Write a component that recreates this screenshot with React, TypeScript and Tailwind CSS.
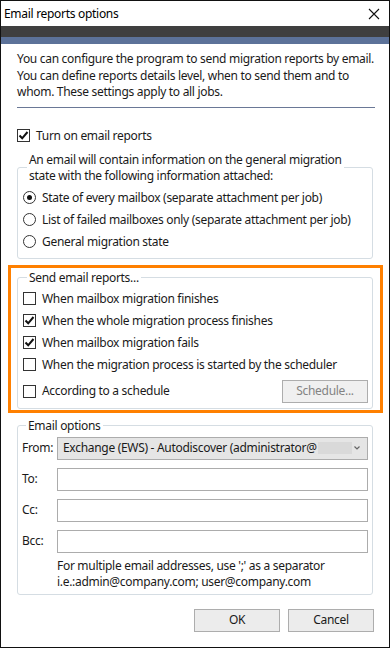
import React from 'react';

const font = { fontFamily: '"Noto Sans", "Open Sans", Arial, sans-serif', letterSpacing: '-0.3px' };

function CheckBox({ checked }: { checked?: boolean }) {
  return (
    <span className="w-[13px] h-[13px] border border-[#333333] bg-white flex items-center justify-center shrink-0">
      {checked && (
        <svg width="11" height="11" viewBox="0 0 11 11">
          <path d="M1.5 5.5 L4.2 8.3 L9.5 2" fill="none" stroke="#111" strokeWidth="2" />
        </svg>
      )}
    </span>
  );
}

function Radio({ checked }: { checked?: boolean }) {
  return (
    <span className="w-[13px] h-[13px] rounded-full border border-[#333333] bg-white flex items-center justify-center shrink-0">
      {checked && <span className="w-[5px] h-[5px] rounded-full bg-[#111]" />}
    </span>
  );
}

function Row({ children, label, mt }: { children: React.ReactNode; label: string; mt: string }) {
  return (
    <div className={`flex items-center h-[16px] ${mt}`}>
      {children}
      <span className="ml-[6px] whitespace-nowrap">{label}</span>
    </div>
  );
}

export default function App() {
  return (
    <div
      style={font}
      className="w-[390px] h-[648px] bg-white border border-[#111] text-[12px] leading-[16px] text-[#1a1a1a] flex flex-col overflow-hidden"
    >
      {/* Title bar */}
      <div className="h-[25px] flex items-center justify-between pl-[3px] pr-[9px]">
        <span className="text-[12px] text-black">Email reports options</span>
        <svg width="12" height="12" viewBox="0 0 12 12">
          <path d="M1 1 L11 11 M11 1 L1 11" stroke="#111" strokeWidth="1.1" />
        </svg>
      </div>
      <div className="h-[11px] bg-[#3f3f3f]" />
      <div className="h-[7px] bg-[#5c7299]" />

      {/* Content */}
      <div className="flex flex-col">
        <p className="mt-[7px] ml-[16px] leading-[16.5px] whitespace-nowrap">
          You can configure the program to send migration reports by email.
          <br />
          You can define reports details level, when to send them and to
          <br />
          whom. These settings apply to all jobs.
        </p>
        <div className="mt-[6px] ml-[16px] w-[358px] h-px bg-[#6a7896]" />

        <div className="ml-[16px] mt-[20px]">
          <Row label="Turn on email reports" mt="mt-0">
            <CheckBox checked />
          </Row>
        </div>

        <fieldset className="ml-[16px] mt-[8px] w-[356px] border border-[#d5dde3] rounded-[3px] pl-[5px] pb-[8px]">
          <legend className="ml-[4px] px-[2px]">
            An email will contain information on the general migration
            <br />
            state with the following information attached:
          </legend>
          <Row label="State of every mailbox (separate attachment per job)" mt="mt-[6px]">
            <Radio checked />
          </Row>
          <Row label="List of failed mailboxes only (separate attachment per job)" mt="mt-[6px]">
            <Radio />
          </Row>
          <Row label="General migration state" mt="mt-[6px]">
            <Radio />
          </Row>
        </fieldset>

        {/* Highlighted section */}
        <div className="ml-[7px] mt-[6px] w-[375px] border-[3px] border-[#ff8000] pt-[2px] pb-[1px] pl-[6px]">
          <fieldset className="w-[356px] border border-[#d5dde3] rounded-[3px] pl-[5px] pb-[5px]">
            <legend className="ml-[4px] px-[2px]">Send email reports...</legend>
            <Row label="When mailbox migration finishes" mt="mt-[5px]">
              <CheckBox />
            </Row>
            <Row label="When the whole migration process finishes" mt="mt-[6px]">
              <CheckBox checked />
            </Row>
            <Row label="When mailbox migration fails" mt="mt-[6px]">
              <CheckBox checked />
            </Row>
            <Row label="When the migration process is started by the scheduler" mt="mt-[6px]">
              <CheckBox />
            </Row>
            <div className="flex items-center justify-between mt-[7px] pr-[4px]">
              <div className="flex items-center">
                <CheckBox />
                <span className="ml-[6px]">According to a schedule</span>
              </div>
              <button className="w-[86px] h-[23px] bg-[#f0f0f0] border border-[#adadad] text-[#838383]">
                Schedule...
              </button>
            </div>
          </fieldset>
        </div>

        <fieldset className="ml-[16px] mt-[5px] w-[356px] border border-[#d5dde3] rounded-[3px] pl-[4px] pr-[4px] pb-[4px]">
          <legend className="ml-[4px] px-[2px]">Email options</legend>
          <div className="flex items-center mt-[3px]">
            <span className="w-[35px]">From:</span>
            <div className="flex-1 h-[23px] bg-[#e5e5e5] border border-[#acacac] flex items-center pl-[5px] pr-[6px]">
              <span className="whitespace-nowrap">Exchange (EWS) - Autodiscover (administrator@</span>
              <span className="w-[34px] h-[12px] bg-[#d9d9d9] ml-px" />
              <svg className="ml-auto" width="8" height="6" viewBox="0 0 8 6">
                <path d="M1.5 1.5 L4 4 L6.5 1.5" fill="none" stroke="#666" strokeWidth="1.2" />
              </svg>
            </div>
          </div>
          {['To:', 'Cc:', 'Bcc:'].map((l) => (
            <div key={l} className="flex items-center mt-[8px]">
              <span className="w-[35px]">{l}</span>
              <div className="flex-1 h-[23px] bg-white border border-[#acacac]" />
            </div>
          ))}
          <div className="ml-[35px] mt-[5px]">
            For multiple email addresses, use ';' as a separator
            <br />
            i.e.:admin@company.com; user@company.com
          </div>
        </fieldset>

        <div className="flex justify-end gap-[8px] mt-[14px] mr-[15px]">
          <button className="w-[86px] h-[23px] bg-[#ececec] border border-[#adadad]">OK</button>
          <button className="w-[86px] h-[23px] bg-[#ececec] border border-[#adadad]">Cancel</button>
        </div>
      </div>
    </div>
  );
}
